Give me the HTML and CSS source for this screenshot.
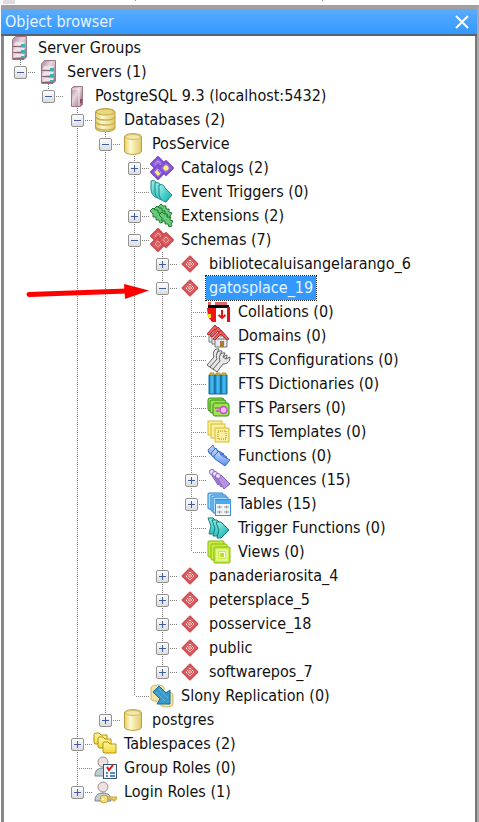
FILE: index.html
```html
<!DOCTYPE html>
<html lang="en">
<head>
<meta charset="utf-8">
<meta name="viewport" content="width=device-width, initial-scale=1">
<title>Object browser</title>
<link rel="stylesheet" href="styles.css">
</head>
<body>
<svg class="sprite" width="0" height="0" aria-hidden="true">
  <defs>
    <linearGradient id="g-steel" x1="0" x2="1" y1="0" y2="1"><stop offset="0" stop-color="#a98597"/><stop offset=".4" stop-color="#e6d6dd"/><stop offset="1" stop-color="#8d6679"/></linearGradient>
    <linearGradient id="g-gold" x1="0" x2="1"><stop offset="0" stop-color="#e3d06a"/><stop offset=".35" stop-color="#fdf9cf"/><stop offset="1" stop-color="#dfc967"/></linearGradient>
    <linearGradient id="g-teal" x1="0" x2="1" y1="0" y2="1"><stop offset="0" stop-color="#a5f0ea"/><stop offset=".6" stop-color="#3cc7c0"/><stop offset="1" stop-color="#1ba39c"/></linearGradient>
    <linearGradient id="g-blue" x1="0" x2="0" y1="0" y2="1"><stop offset="0" stop-color="#c5dcff"/><stop offset="1" stop-color="#5c8fe6"/></linearGradient>
    <linearGradient id="g-book" x1="0" x2="1"><stop offset="0" stop-color="#1583c2"/><stop offset=".5" stop-color="#4cc0f3"/><stop offset="1" stop-color="#1887c7"/></linearGradient>
    <linearGradient id="g-folder" x1="0" x2="0" y1="0" y2="1"><stop offset="0" stop-color="#fdf8a4"/><stop offset="1" stop-color="#f0d936"/></linearGradient>
    <g id="p-violet"><path d="M0-7 7 0 0 7-7 0Z" fill="#9a68e0" stroke="#7d4bcf" stroke-width="2" stroke-linejoin="round"/><path d="M0-3 3 0 0 3-3 0Z" fill="none" stroke="#d3bdf8" stroke-dasharray="1 1"/></g>
    <g id="p-red"><path d="M0-7 7 0 0 7-7 0Z" fill="#e06264" stroke="#cf4d52" stroke-width="2" stroke-linejoin="round"/><path d="M0-3 3 0 0 3-3 0Z" fill="none" stroke="#ffd9d9" stroke-dasharray="1 1"/></g>
    <path id="p-cap" d="M1 1C4 0 6 1 7 4L14 11 8 18C4 17 2 15 1 10Z" fill="url(#g-teal)" stroke="#15868c"/>
    <path id="p-jig" d="M0 3 3 0 5 2 8 2 8 5 11 5 11 8 14 9 12 12 13 14 10 15 9 12 6 12 6 9 3 9 3 6Z" fill="#68c979" stroke="#1f7a35"/>
    <g id="p-house"><path d="M2 9H14V17H2Z" fill="#e5e8ef" stroke="#777"/><path d="M0 9 8 0 16 9 14 10 8 4 2 10Z" fill="#ef5d5d" stroke="#b52d31"/></g>
    <path id="p-wrench" d="M1 17 8 9C6 4 9 0 13 1L11 5 14 7 18 5C18 10 15 12 11 12L5 20Z" fill="#e7e7e7" stroke="#606060"/>
    <g id="p-book"><path d="M0 2H6V21H0Z" fill="url(#g-book)" stroke="#126b9f"/><path d="M1 0H5V2H1Z" fill="#e6c638" stroke="#ac912c"/></g>
    <rect id="p-green" width="16" height="13" rx="2" fill="#9be44d" stroke="#398c1e"/>
    <rect id="p-note" width="14" height="14" fill="#f9f1a1" stroke="#d5bb2b"/>
    <path id="p-fn" d="M0 5 5 0 7 4 16 9 11 15 1 8Z" fill="url(#g-blue)" stroke="#396bca" stroke-linejoin="round"/>
    <g id="p-seq"><path d="M2 5 6 2 15 11 9 16Z" fill="#b493df" stroke="#8560bd"/><circle cx="3" cy="3" r="2.500" fill="#efe3ff" stroke="#8b66c2"/></g>
    <rect id="p-sheet" width="15" height="16" rx="1" fill="#a9dcff" stroke="#237ec7"/>
    <path id="p-trig" d="M0 1H5L13 9 5 17H1L3 9Z" fill="url(#g-teal)" stroke="#107d80" stroke-linejoin="round"/>
    <rect id="p-view" width="16" height="16" rx="1" fill="#c9ed44" stroke="#86b70a"/>
    <path id="p-folder" d="M0 1 1 0H5L7 2H13V11H1L0 10Z" fill="url(#g-folder)" stroke="#b8930e" stroke-linejoin="round"/>
    <g id="p-user"><path d="M1 20C1 14 4 12 9 12S17 14 17 20Z" fill="#c0cdd3" stroke="#77868d"/><circle cx="9" cy="6" r="5" fill="#eee0df" stroke="#9b9191"/></g>
  </defs>
  <symbol id="i-groups" viewBox="0 0 24 24">
    <path d="M5.500 4 8.500.500H19.500V21L17 23.500H5.500Z" fill="url(#g-steel)" stroke="#9c7788"/>
    <path d="M7 8 9 6H18L16.500 9H7ZM7 14 9 12H18L16.500 15H7ZM7 20 9 18H18L16.500 21H7Z" fill="#eee3e8"/>
    <path d="M6 10.500H17M6 16.500H17M6 22.500H17" stroke="#8a6575"/>
    <path d="M14 8H18V11H14ZM14 14H18V17H14ZM14 20H18V22H14Z" fill="#35b4b4"/>
  </symbol>
  <symbol id="i-server" viewBox="0 0 24 24">
    <path d="M7.500 4.500 9.500 2.500H18.500V20.500L16.500 22.500H7.500Z" fill="url(#g-steel)" stroke="#9b7688"/>
    <path d="M8 5H15V22" fill="none" stroke="#f8edf2"/><path d="M16 15H18V19H16Z" fill="#a44263"/>
  </symbol>
  <symbol id="i-dbs" viewBox="0 0 24 24">
    <path d="M2.500 4C2.500-.500 22-.500 22 4V20C22 25 2.500 25 2.500 20Z" fill="url(#g-gold)" stroke="#bd9e38"/>
    <ellipse cx="12.200" cy="4" rx="9" ry="3" fill="#e8d880" stroke="#c4a748"/>
    <path d="M3 9C4 13 20 13 22 9M3 14C4 18 20 18 22 14M3 19C4 23 20 23 22 19" fill="none" stroke="#c9ae55" stroke-width="1.500"/>
  </symbol>
  <symbol id="i-db" viewBox="0 0 24 24">
    <path d="M3.500 5C3.500.500 20.500.500 20.500 5V19C20.500 23.500 3.500 23.500 3.500 19Z" fill="url(#g-gold)" stroke="#bd9e38"/>
    <ellipse cx="12" cy="5" rx="7.500" ry="2.500" fill="#f1e7a7" stroke="#d5bd66"/>
  </symbol>
  <symbol id="i-catalogs" viewBox="0 0 24 24">
    <use href="#p-violet" x="8" y="8"/><use href="#p-violet" x="8" y="16"/><use href="#p-violet" x="16" y="12"/>
    <circle cx="16" cy="12" r="2.500" fill="#fff26b"/><path d="M6 15 9 19" stroke="#fff26b" stroke-width="3"/>
  </symbol>
  <symbol id="i-events" viewBox="0 0 24 24"><use href="#p-cap" x="0" y="0"/><use href="#p-cap" x="4" y="2"/><use href="#p-cap" x="8" y="4"/></symbol>
  <symbol id="i-ext" viewBox="0 0 24 24"><use href="#p-jig" x="8" y="0"/><use href="#p-jig" x="4" y="2"/><use href="#p-jig" x="0" y="4"/><use href="#p-jig" x="9" y="8"/></symbol>
  <symbol id="i-schemas" viewBox="0 0 24 24"><use href="#p-red" x="8" y="8"/><use href="#p-red" x="8" y="16"/><use href="#p-red" x="16" y="12"/></symbol>
  <symbol id="i-schema" viewBox="0 0 24 24">
    <path d="M12 4.500 19.500 12 12 19.500 4.500 12Z" fill="#dd5f61" stroke="#d05358" stroke-width="2" stroke-linejoin="round"/>
    <path d="M12 8 16 12 12 16 8 12Z" fill="none" stroke="#ffdcdc" stroke-dasharray="2 1"/>
    <path d="M12 10.500 13.500 12 12 13.500 10.500 12Z" fill="none" stroke="#ffdcdc"/>
  </symbol>
  <symbol id="i-coll" viewBox="0 0 24 24">
    <path d="M1 2H4V5H1ZM8 2H20V5H8Z" fill="#dc6a6a"/><path d="M1 5H22V8H1Z" fill="#000"/>
    <path d="M0 8H9V22H5L1 17Z" fill="#ee1515"/><path d="M1 14H4V18H1Z" fill="#ffe326"/><path d="M9 8H20V22H9Z" fill="#fff"/>
    <path d="M21.500 7V22" stroke="#e31313" stroke-width="3"/><path d="M15 10V18M11.500 15 15 18 18.500 15" fill="none" stroke="#e31313" stroke-width="2"/>
  </symbol>
  <symbol id="i-domains" viewBox="0 0 24 24">
    <use href="#p-house" x="0" y="1"/><use href="#p-house" x="3" y="3"/><use href="#p-house" x="6" y="6"/><path d="M13 17H17V23H13Z" fill="#a87a30"/>
  </symbol>
  <symbol id="i-conf" viewBox="0 0 24 24"><use href="#p-wrench" x="-1" y="0"/><use href="#p-wrench" x="2" y="2"/><use href="#p-wrench" x="5" y="4"/></symbol>
  <symbol id="i-dict" viewBox="0 0 24 24"><use href="#p-book" x="2" y="1"/><use href="#p-book" x="8" y="1"/><use href="#p-book" x="14" y="1"/></symbol>
  <symbol id="i-pars" viewBox="0 0 24 24">
    <use href="#p-green" x="1" y="2"/><use href="#p-green" x="3" y="4"/><use href="#p-green" x="6" y="7"/>
    <path d="M8 12H13M9 15H12" stroke="#c24fc4" stroke-width="1.500"/><circle cx="16.500" cy="14" r="3.500" fill="#f3bbed" stroke="#c24fc4" stroke-width="1.500"/>
  </symbol>
  <symbol id="i-tmpl" viewBox="0 0 24 24">
    <use href="#p-note" x="1" y="1"/><use href="#p-note" x="4" y="4"/><use href="#p-note" x="8" y="8"/><rect x="11" y="11" width="8" height="8" fill="none" stroke="#a6850f" stroke-dasharray="1 1"/>
  </symbol>
  <symbol id="i-fn" viewBox="0 0 24 24"><use href="#p-fn" x="1" y="1"/><use href="#p-fn" x="4" y="4"/><use href="#p-fn" x="7" y="7"/></symbol>
  <symbol id="i-seq" viewBox="0 0 24 24"><use href="#p-seq" x="2" y="1"/><use href="#p-seq" x="5" y="3"/><use href="#p-seq" x="8" y="5"/></symbol>
  <symbol id="i-tables" viewBox="0 0 24 24">
    <use href="#p-sheet" x="1" y="1"/><use href="#p-sheet" x="4" y="3"/><use href="#p-sheet" x="6" y="5"/>
    <rect x="8.500" y="7.500" width="15" height="16" fill="#eef5fb" stroke="#3c91d4"/><path d="M8 8H24V12H8Z" fill="#4aaaf0"/>
    <path d="M10 15H15M17 15H22M10 20H15M17 20H22M12.500 13.500V16.500M19.500 13.500V16.500M12.500 18.500V21.500M19.500 18.500V21.500" stroke="#9b9b9b"/>
  </symbol>
  <symbol id="i-trig" viewBox="0 0 24 24"><use href="#p-trig" x="1" y="1"/><use href="#p-trig" x="5" y="3"/><use href="#p-trig" x="9" y="5"/></symbol>
  <symbol id="i-views" viewBox="0 0 24 24">
    <use href="#p-view" x="1" y="1"/><use href="#p-view" x="4" y="4"/><use href="#p-view" x="7" y="7"/>
    <rect x="10" y="10" width="10" height="10" fill="none" stroke="#fbffe2"/><rect x="12.500" y="12.500" width="5" height="5" fill="#b7df2d" stroke="#fbffe2"/>
  </symbol>
  <symbol id="i-slony" viewBox="0 0 24 24">
    <path d="M1 4C1 0 14 0 14 4V15C14 18 1 18 1 15Z" fill="#f0e4a8" stroke="#cdb866"/><path d="M10 11C10 7 23 7 23 11V20C23 24 10 24 10 20Z" fill="#f0e4a8" stroke="#cdb866"/>
    <path d="M3 8 9 2 16 9 20 6V20H7L10 15Z" fill="#399acb" stroke="#176c9e" stroke-linejoin="round"/><path d="M6 8 15 17M9 5 18 14" stroke="#83cdee" stroke-dasharray="1 1"/>
  </symbol>
  <symbol id="i-spaces" viewBox="0 0 24 24"><use href="#p-folder" x="1" y="1"/><use href="#p-folder" x="5" y="5"/><use href="#p-folder" x="10" y="10"/></symbol>
  <symbol id="i-group" viewBox="0 0 24 24">
    <use href="#p-user" x="1" y="0"/><rect x="10.500" y="8.500" width="13" height="14" fill="#eff7ff" stroke="#38576f"/>
    <path d="M14 11 16 14 20 9" fill="none" stroke="#e31414" stroke-width="2"/><path d="M13 17H15M17 17H22M13 20H15M17 20H22" stroke="#2864ae" stroke-width="1.500"/>
  </symbol>
  <symbol id="i-login" viewBox="0 0 24 24">
    <use href="#p-user" x="1" y="1"/><path d="M14 17H24V19H22V21H20V19H15V20H12V17Z" fill="#efd36b" stroke="#c7a335"/><ellipse cx="11" cy="19" rx="4" ry="4" fill="#f3dd7c" stroke="#c7a335"/><circle cx="10" cy="19" r="1" fill="#fff"/>
  </symbol>
</svg>

<div class="strip" aria-hidden="true"><i></i><i></i><i></i></div>
<main class="panel">
  <header class="titlebar">
    <h1>Object browser</h1>
    <button class="close" type="button" aria-label="Close"><svg viewBox="0 0 14 14"><path d="M1 1 13 13M13 1 1 13"/></svg></button>
  </header>
  <div class="body">
  <ul class="tree">
    <li><div class="row"><svg class="icon"><use href="#i-groups"/></svg><span class="label">Server Groups</span></div>
    <ul class="first">
      <li><div class="row"><button class="toggle" type="button" aria-expanded="true" aria-label="Servers"></button><svg class="icon"><use href="#i-groups"/></svg><span class="label">Servers (1)</span></div>
      <ul class="even">
        <li><div class="row"><button class="toggle" type="button" aria-expanded="true" aria-label="PostgreSQL 9.3"></button><svg class="icon"><use href="#i-server"/></svg><span class="label">PostgreSQL 9.3 (localhost:5432)</span></div>
        <ul class="odd">
          <li><div class="row"><button class="toggle" type="button" aria-expanded="true" aria-label="Databases"></button><svg class="icon"><use href="#i-dbs"/></svg><span class="label">Databases (2)</span></div>
          <ul class="even">
            <li><div class="row"><button class="toggle" type="button" aria-expanded="true" aria-label="PosService"></button><svg class="icon"><use href="#i-db"/></svg><span class="label">PosService</span></div>
            <ul class="odd">
              <li><div class="row"><button class="toggle" type="button" aria-expanded="false" aria-label="Catalogs"></button><svg class="icon"><use href="#i-catalogs"/></svg><span class="label">Catalogs (2)</span></div></li>
              <li><div class="row leaf"><svg class="icon"><use href="#i-events"/></svg><span class="label">Event Triggers (0)</span></div></li>
              <li><div class="row"><button class="toggle" type="button" aria-expanded="false" aria-label="Extensions"></button><svg class="icon"><use href="#i-ext"/></svg><span class="label">Extensions (2)</span></div></li>
              <li><div class="row"><button class="toggle" type="button" aria-expanded="true" aria-label="Schemas"></button><svg class="icon"><use href="#i-schemas"/></svg><span class="label">Schemas (7)</span></div>
              <ul class="even">
                <li><div class="row"><button class="toggle" type="button" aria-expanded="false" aria-label="bibliotecaluisangelarango_6"></button><svg class="icon"><use href="#i-schema"/></svg><span class="label">bibliotecaluisangelarango_6</span></div></li>
                <li><div class="row"><button class="toggle" type="button" aria-expanded="true" aria-label="gatosplace_19"></button><svg class="icon"><use href="#i-schema"/></svg><span class="label selected">gatosplace_19</span></div>
                <ul class="odd">
                  <li><div class="row leaf"><svg class="icon"><use href="#i-coll"/></svg><span class="label">Collations (0)</span></div></li>
                  <li><div class="row leaf"><svg class="icon"><use href="#i-domains"/></svg><span class="label">Domains (0)</span></div></li>
                  <li><div class="row leaf"><svg class="icon"><use href="#i-conf"/></svg><span class="label">FTS Configurations (0)</span></div></li>
                  <li><div class="row leaf"><svg class="icon"><use href="#i-dict"/></svg><span class="label">FTS Dictionaries (0)</span></div></li>
                  <li><div class="row leaf"><svg class="icon"><use href="#i-pars"/></svg><span class="label">FTS Parsers (0)</span></div></li>
                  <li><div class="row leaf"><svg class="icon"><use href="#i-tmpl"/></svg><span class="label">FTS Templates (0)</span></div></li>
                  <li><div class="row leaf"><svg class="icon"><use href="#i-fn"/></svg><span class="label">Functions (0)</span></div></li>
                  <li><div class="row"><button class="toggle" type="button" aria-expanded="false" aria-label="Sequences"></button><svg class="icon"><use href="#i-seq"/></svg><span class="label">Sequences (15)</span></div></li>
                  <li><div class="row"><button class="toggle" type="button" aria-expanded="false" aria-label="Tables"></button><svg class="icon"><use href="#i-tables"/></svg><span class="label">Tables (15)</span></div></li>
                  <li><div class="row leaf"><svg class="icon"><use href="#i-trig"/></svg><span class="label">Trigger Functions (0)</span></div></li>
                  <li><div class="row leaf"><svg class="icon"><use href="#i-views"/></svg><span class="label">Views (0)</span></div></li>
                </ul></li>
                <li><div class="row"><button class="toggle" type="button" aria-expanded="false" aria-label="panaderiarosita_4"></button><svg class="icon"><use href="#i-schema"/></svg><span class="label">panaderiarosita_4</span></div></li>
                <li><div class="row"><button class="toggle" type="button" aria-expanded="false" aria-label="petersplace_5"></button><svg class="icon"><use href="#i-schema"/></svg><span class="label">petersplace_5</span></div></li>
                <li><div class="row"><button class="toggle" type="button" aria-expanded="false" aria-label="posservice_18"></button><svg class="icon"><use href="#i-schema"/></svg><span class="label">posservice_18</span></div></li>
                <li><div class="row"><button class="toggle" type="button" aria-expanded="false" aria-label="public"></button><svg class="icon"><use href="#i-schema"/></svg><span class="label">public</span></div></li>
                <li><div class="row"><button class="toggle" type="button" aria-expanded="false" aria-label="softwarepos_7"></button><svg class="icon"><use href="#i-schema"/></svg><span class="label">softwarepos_7</span></div></li>
              </ul></li>
              <li><div class="row leaf"><svg class="icon"><use href="#i-slony"/></svg><span class="label">Slony Replication (0)</span></div></li>
            </ul></li>
            <li><div class="row"><button class="toggle" type="button" aria-expanded="false" aria-label="postgres"></button><svg class="icon"><use href="#i-db"/></svg><span class="label">postgres</span></div></li>
          </ul></li>
          <li><div class="row"><button class="toggle" type="button" aria-expanded="false" aria-label="Tablespaces"></button><svg class="icon"><use href="#i-spaces"/></svg><span class="label">Tablespaces (2)</span></div></li>
          <li><div class="row leaf"><svg class="icon"><use href="#i-group"/></svg><span class="label">Group Roles (0)</span></div></li>
          <li><div class="row"><button class="toggle" type="button" aria-expanded="false" aria-label="Login Roles"></button><svg class="icon"><use href="#i-login"/></svg><span class="label">Login Roles (1)</span></div></li>
        </ul></li>
      </ul></li>
    </ul></li>
  </ul>
  <svg class="arrow" viewBox="0 0 126 16" aria-hidden="true"><path d="M6 10.500 104 7" stroke="#f00" stroke-width="5" stroke-linecap="round"/><path d="M101 0 126 6.500 102 15Z" fill="#f00"/></svg>
  </div>
</main>
</body>
</html>
```
FILE: styles.css
```css
* { box-sizing: border-box; }

body {
  margin: 0;
  min-height: 100vh;
  display: flex;
  flex-direction: column;
  background: #fff;
  color: #111;
  font: 16px/24px "DejaVu Sans Condensed", "DejaVu Sans", sans-serif;
}

.sprite { position: absolute; }

.strip {
  height: 5px;
  display: grid;
  grid-template-columns: 12px 1px 1px;
  column-gap: 120px;
  padding-left: 3px;
}
.strip i { background: #999; height: 1px; }
.strip i:first-child { background: #ddd; height: 4px; }
.strip i:last-child { margin-left: 66px; width: 1px; }

.panel {
  flex: 1;
  display: flex;
  flex-direction: column;
  margin-left: 1px;
  border-top: 4px solid #a0a0a0;
  border-right: 2px solid #aaa;
}

.titlebar {
  display: flex;
  align-items: center;
  justify-content: space-between;
  height: 27px;
  padding: 0 8px 0 4px;
  border-bottom: 2px solid #59626d;
  background: linear-gradient(#5aabff, #3399ff);
  color: #e6f2ff;
}
.titlebar h1 { margin: 0; font: inherit; }

.close {
  display: flex;
  padding: 0;
  border: 0;
  background: none;
}
.close svg {
  width: 14px;
  height: 14px;
  fill: none;
  stroke: #fff;
  stroke-width: 2;
}

.body {
  position: relative;
  flex: 1;
  border-left: 3px solid #888;
  border-right: 2px solid #777;
}

ul { margin: 0; padding: 0; list-style: none; }
.tree > li { padding-left: 3px; }
.first { padding-left: 7px; }
.even { padding-left: 28px; }
.odd { padding-left: 29px; }

/* Dotted guide that joins the children of one node */
li li {
  background: repeating-linear-gradient(#808080 0 1px, transparent 1px 2px) 6px 0 / 1px 100% no-repeat;
}
li li:last-child { background-size: 1px 12px; }

.row {
  display: flex;
  align-items: center;
  height: 24px;
  white-space: nowrap;
}

.toggle {
  position: relative;
  flex: none;
  width: 13px;
  height: 13px;
  margin-right: 9px;
  padding: 0;
  border: 1px solid #929292;
  border-radius: 2px;
  background:
    linear-gradient(#3d5ca8, #3d5ca8) center / 7px 1px no-repeat,
    linear-gradient(#fff, #dcdcdc);
}
.toggle[aria-expanded="false"] {
  background:
    linear-gradient(#3d5ca8, #3d5ca8) center / 7px 1px no-repeat,
    linear-gradient(#3d5ca8, #3d5ca8) center / 1px 7px no-repeat,
    linear-gradient(#fff, #dcdcdc);
}
.toggle::after,
.leaf::before {
  content: "";
  height: 1px;
  background: repeating-linear-gradient(90deg, #808080 0 1px, transparent 1px 2px);
}
.toggle::after {
  position: absolute;
  left: 13px;
  top: 5px;
  width: 7px;
}
.leaf::before {
  width: 14px;
  margin-left: 8px;
}

.icon {
  flex: none;
  width: 24px;
  height: 24px;
}

.label {
  margin-left: 4px;
  padding: 0 3px;
}
.selected {
  background: #3399ff;
  color: #e9f4ff;
  outline: 1px dotted #222;
}

/* Marker that points at the selected schema */
.arrow {
  position: absolute;
  left: 19px;
  top: 248px;
  width: 126px;
  height: 16px;
}
```
